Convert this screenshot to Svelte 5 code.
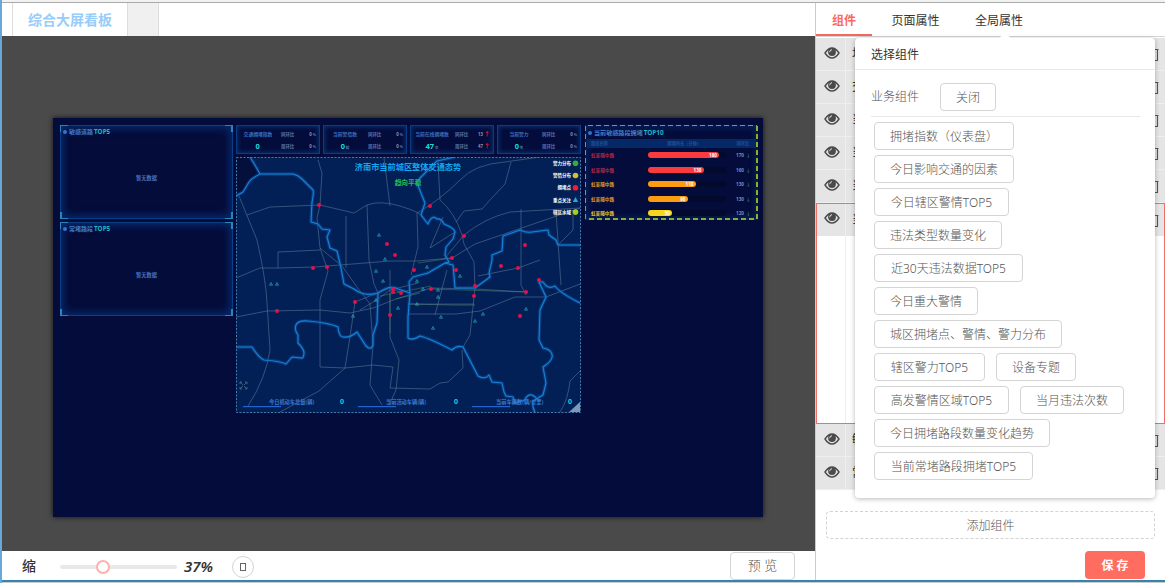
<script>
  const tabs = ['组件', '页面属性', '全局属性'];
  const layers = [
    { name: '地', open: false }, { name: '交', open: false }, { name: '当', open: false },
    { name: '当', open: false }, { name: '当', open: false }, { name: '当', open: true },
    { name: '敏', open: false }, { name: '常', open: false }
  ];
  const widgets = [
    ['拥堵指数（仪表盘）', 140], ['今日影响交通的因素', 140], ['今日辖区警情TOP5', 135],
    ['违法类型数量变化', 128], ['近30天违法数据TOP5', 149], ['今日重大警情', 104],
    ['城区拥堵点、警情、警力分布', 188], ['辖区警力TOP5', 111], ['设备专题', 80],
    ['高发警情区域TOP5', 135], ['当月违法次数', 104], ['今日拥堵路段数量变化趋势', 176],
    ['当前常堵路段拥堵TOP5', 159]
  ];
  const stats = [
    { t: '交通拥堵指数', v: '0', u: '', a: '0', b: '0', up: false },
    { t: '当前警情数', v: '0', u: '起', a: '0', b: '0', up: false },
    { t: '当前在线拥堵数', v: '47', u: '条', a: '13', b: '47', up: true },
    { t: '当前警力', v: '0', u: '名', a: '0', b: '0', up: false }
  ];
  const ranks = [
    { w: 71, c: '#f93b3e', n: '#b52846', v: '180', p: '170' },
    { w: 55.5, c: '#f93b3e', n: '#b52846', v: '130', p: '160' },
    { w: 47.5, c: '#fb9c12', n: '#e29a27', v: '110', p: '130' },
    { w: 39.5, c: '#fb9c12', n: '#e29a27', v: '90', p: '130' },
    { w: 24, c: '#fbd51a', n: '#e8c92b', v: '50', p: '120' }
  ];
  const legend = [
    ['警力分布', '#35ad3d', 'dot'], ['警情分布', '#d8bd31', 'dot'], ['拥堵点', '#ec1e3c', 'dot'],
    ['重点关注', '#16aee5', 'tri'], ['辖区水域', '#a2cf22', 'dot']
  ];
  const totals = [['今日机动车总量(辆)', 269, 243, 342], ['当前活动车辆(辆)', 386, 358, 456], ['当前车辆数(辆/公里)', 496, 472, 570]];
  const rivers = [
    'M250 157L256 167L260 174H293Q298 175 302 179L313 190Q314 193 312 202L311 222L318 224L322 229L330 230L327 237L330 248L337 251L341 268L344 284L354 289Q364 297 378 293Q391 284 398 289L410 293',
    'M260 174Q252 178 249 182L243 192L236 196',
    'M378 293L377 323L373 335L373 345Q371 351 366 346L357 332Q350 338 343 337Q339 337 338 327Q330 323 308 321Q298 320 296 325Q294 330 298 335L298 343Q303 348 304 352Q304 359 301 358L292 357L286 364Q280 361 264 360Q259 358 252 347L236 347',
    'M455 157L437 161L420 178L417 183L425 203L421 215L428 224Q432 214 437 219Q441 218 444 224Q454 228 455 232L453 239L446 247L445 255L449 262L445 263L428 273L413 277L409 282L410 293L408 317V338Q412 341 420 336Q429 338 452 350Q457 345 463 347L478 376Q485 380 489 375L492 382L502 383L504 392L506 396L513 397L515 403L525 400Q527 394 532 395Q540 399 533 401L533 407L535 413',
    'M533 401L543 395L546 383L543 367Q554 360 552 354Q550 349 543 348L539 340L540 310L546 297L539 282L543 282Q548 290 555 286Q560 293 580 303',
    'M445 263L453 265L455 288H475L490 277L489 273L492 260V255L502 251L503 236L520 230Q526 233 532 232L548 230L549 235L556 240L558 245H580'
  ];
  const roads = [
    'M318 160L322 173L320 205L317 218L320 248L328 271L320 300V367L345 368L373 365L393 367L390 388L430 389L440 383L448 382L463 368L462 350',
    'M239 196L257 240Q266 280 267 303L270 350Q266 378 248 406',
    'M247 215L270 207L320 205L354 213L367 205Q380 200 400 206T423 217',
    'M236 278L260 268H278L315 267L390 261L417 261L452 258L475 244L580 208',
    'M236 317L267 311L320 310L350 313L373 308L396 299L431 288L475 289L526 292',
    'M278 268V252L320 250', 'M320 248L342 266L357 287L370 304L373 345L370 385L382 405',
    'M346 216V268', 'M367 205L369 260L374 284L378 293', 'M384 158L390 206',
    'M417 213Q440 200 460 180Q475 164 505 162L540 157', 'M440 200Q455 213 462 235L464 244L474 262L475 288L470 335L463 347',
    'M402 293L390 288L355 302L350 337L345 368L319 391L280 412', 'M390 270V337L399 360L396 390L389 405',
    'M438 162L440 200', 'M511 162L505 184L490 200L482 209L464 211L456 222',
    'M521 209V285L526 295', 'M556 212L561 285', 'M573 210V230L558 245',
    'M418 283L390 290L378 299L360 310', 'M408 304L455 305H475', 'M408 314H456L480 311L515 297H546L580 284',
    'M447 270L435 315', 'M478 276L518 268L540 260', 'M417 213L418 247L411 275', 'M580 371L570 381Q568 400 560 412',
    'M455 232L430 248L443 217', 'M444 259L464 235Q485 218 510 212L580 208'
  ];
  const spots = [[319,205],[387,244],[395,255],[327,267],[313,268],[277,311],[355,302],[393,289],[393,292],[401,293],[390,315],[414,270],[431,289],[456,270],[474,296],[475,286],[501,266],[518,268],[539,280],[526,292],[520,316],[430,206],[464,236],[525,245],[452,258]];
  const marks = [[379,235],[385,259],[271,284],[277,284],[376,271],[383,281],[398,308],[353,316],[376,300],[460,276],[483,314],[475,321],[433,328],[441,317],[438,290],[423,289],[438,297],[417,304],[417,281],[427,267],[526,309]];
</script>

<div class="app">
  <div class="strip"></div>
  <div class="body">
    <section class="editor">
      <div class="pages"><div class="page">综合大屏看板</div><div class="page blank"></div></div>
      <div class="stage">
        <div class="board">
          <div class="col side">
            {#each ['敏感道路', '常堵路段'] as title}
              <div class="panel">
                <i></i><i></i><i></i><i></i>
                <div class="ptitle"><b></b><span>{title}</span><em>TOP5</em></div>
                <div class="empty">暂无数据</div>
              </div>
            {/each}
          </div>
          <div class="col mid">
            <div class="stats">
              {#each stats as s}
                <div class="stat">
                  <span class="st">{s.t}</span><span>同环比</span><span class="r">{s.a}{#if s.up}<u>↑</u>{:else}<small>%</small>{/if}</span>
                  <span class="sv">{s.v}<small>{s.u}</small></span><span>周环比</span><span class="r">{s.b}{#if s.up}<u>↑</u>{:else}<small>%</small>{/if}</span>
                </div>
              {/each}
            </div>
            <svg class="map" viewBox="236 157 345 256" width="345" height="256">
              <rect x="236" y="157" width="345" height="256" fill="#022056" />
              <path d="M236 157H250L260 174L249 182L243 192L236 196Z" fill="#050f3b" />
              <g fill="none" stroke="#7590a8" stroke-width=".6" opacity=".75" stroke-linejoin="round">
                {#each roads as d}<path {d} />{/each}
              </g>
              <g fill="none" stroke="#68a85b" stroke-width=".6" opacity=".65">
                <path d="M390 294V333M380 296L431 286M408 304H474M431 289L526 292M452 258L418 263M396 299L420 293" />
              </g>
              <g fill="none" stroke-linejoin="round">
                <g stroke="#0b54a4" stroke-width="3.4" opacity=".5">{#each rivers as d}<path {d} />{/each}</g>
                <g stroke="#1783d6" stroke-width="1.1">{#each rivers as d}<path {d} />{/each}</g>
              </g>
              {#each marks as [x, y]}<path d="M{x} {y - 1.5}l1.5 2.7h-3z" fill="none" stroke="#2fc0cc" stroke-width=".6" />{/each}
              {#each spots as [x, y]}<circle cx={x} cy={y} r="2" fill="#e4104a" />{/each}
              <text x="408" y="170" text-anchor="middle" font-size="8.2" font-weight="bold" fill="#16a6ef">济南市当前城区整体交通态势</text>
              <text x="408" y="184.5" text-anchor="middle" font-size="6.7" font-weight="bold" fill="#23bf58">趋向平稳</text>
              {#each legend as [t, c, k], i}
                <text x="571" y={165 + i * 12.2} text-anchor="end" font-size="4.5" font-weight="bold" fill="#fff">{t}</text>
                {#if k === 'dot'}<circle cx="575.5" cy={163.3 + i * 12.2} r="2.8" fill={c} />
                {:else}<path d="M575.5 197l2.7 5h-5.4z" fill={c} />{/if}
              {/each}
              {#each totals as [t, x, l, v]}
                <text {x} y="404.4" font-size="5.2" font-weight="bold" fill="#3d7ad3">{t}</text>
                <rect x={l} y="406" width="38" height="1.2" fill="#2563cf" />
                <text x={v} y="404.2" text-anchor="middle" font-size="6.8" font-weight="bold" fill="#1ce0d8">0</text>
              {/each}
              <path d="M240 384v-2h2m-2 0l3 3m4-1v-2h-2m2 0l-3 3m-4 2v2h2m-2 0l3-3m4 1v2h-2m2 0l-3-3" fill="none" stroke="#516b8d" stroke-width=".8" />
              <path d="M580 402v10h-11z" fill="#7d98ba" />
              <rect x="236.5" y="157.5" width="344" height="255" fill="none" stroke="#4779a8" stroke-dasharray="2 1.5" />
            </svg>
          </div>
          <div class="rank">
            <svg class="frame" width="173" height="95"><path d="M.5 94V.5H172" stroke="#3aa9d1" /><path d="M172 1V94H1" stroke="#b6df2b" stroke-width="1.5" /></svg>
            <div class="ptitle"><b></b><span>当前敏感路段拥堵</span><em>TOP10</em></div>
            <div class="rhead"><span>路段名称</span><span>拥堵时长（分钟）</span><span>同环比</span></div>
            {#each ranks as r}
              <div class="rrow">
                <span style:color={r.n}>虹吴隧中路</span>
                <div class="track"><div class="fill" style:width="{r.w}px" style:background={r.c}>{r.v}</div></div>
                <span class="pct">{r.p}<s>↓</s></span>
              </div>
            {/each}
          </div>
        </div>
      </div>
      <footer>
        <span class="zoomname">缩</span>
        <div class="slider"><div class="knob"></div></div>
        <span class="zoomval">37%</span>
        <span class="round"><span></span></span>
        <button class="preview">预 览</button>
      </footer>
    </section>

    <aside>
      <nav>{#each tabs as t, i}<div class="tab" class:on={i === 0}>{t}</div>{/each}</nav>
      <div class="layers">
        {#each layers as l}
          <div class="layer" class:open={l.open}>
            <div class="lrow">
              <div class="eye">
                <svg width="16" height="14" viewBox="0 0 16 14"><path d="M1 7Q4.3 2 8 2T15 7Q11.7 12 8 12T1 7Z" fill="none" stroke="#4a4a4a" stroke-width="1.4" /><circle cx="8" cy="6" r="3.9" fill="#4a4a4a" /><path d="M5.7 6.2Q5.8 3.8 8 3.7" fill="none" stroke="#e5e5e5" stroke-width="1" /></svg>
              </div>
              <div class="lname">{l.name}</div>
              <svg class="bin" width="14" height="14" viewBox="0 0 14 14"><path d="M0 1.5H13.5M2 4V12.5H12.5V1.5M5.5 5V10M9 5V10" fill="none" stroke="#555" stroke-width="1.1" /></svg>
            </div>
            {#if l.open}<div class="detail"><div></div></div>{/if}
          </div>
        {/each}
      </div>
      <div class="add">添加组件</div>
      <button class="save">保 存</button>

      <div class="pop">
        <div class="arrow"></div>
        <div class="phead">选择组件</div>
        <div class="pbody">
          <div class="group"><span>业务组件</span><button style:width="56px">关闭</button></div>
          <div class="opts">{#each widgets as [t, w]}<button style:width="{w}px">{t}</button>{/each}</div>
        </div>
      </div>
    </aside>
  </div>
</div>

<style>
  :global(body) { background: #fff; overflow: hidden; }
  * { box-sizing: border-box; }
  .app { width: 1165px; height: 583px; display: flex; flex-direction: column; font: 12px/1.5 "Noto Sans", "Noto Sans CJK SC", sans-serif; color: #555; background: #c9cdd0; border-left: 2px solid #66a9d9; padding-bottom: 1px; }
  .strip { height: 3px; flex: none; background: #f2f2f2; border-bottom: 1px solid #aaa; }
  .body { flex: 1; min-height: 0; display: flex; background: #fff; border-bottom: 2px solid #3385ab; }
  .editor { width: 813px; display: flex; flex-direction: column; }
  .pages { height: 33px; flex: none; display: flex; padding-left: 10px; }
  .page { width: 116px; border: solid #ddd; border-width: 0 1px; text-align: center; font-size: 14px; font-weight: bold; line-height: 34px; color: #99cdf9; }
  .blank { width: 31px; background: #f0f0f0; border-left: 0; }
  .stage { height: 515px; flex: none; background: #4a4a4a; padding: 82px 0 0 51px; }
  .board { width: 710px; height: 399px; background: #040c3c; box-shadow: 0 0 5px #111; display: flex; gap: 3px; padding: 7px 5px 7px 7px; }
  .col { display: flex; flex-direction: column; }
  .side { width: 173px; gap: 3px; }
  .panel { position: relative; height: 94px; border: 1px solid #0b3f83; background: #040c39; box-shadow: inset 0 0 9px 2px #062e75; display: flex; flex-direction: column; }
  .panel i { position: absolute; width: 8px; height: 7px; border: 1px solid #2586bc; }
  .panel i:nth-child(1) { left: -1px; top: -1px; border-width: 1px 0 0 1px; }
  .panel i:nth-child(2) { right: -1px; top: -1px; border-width: 1px 2px 0 0; }
  .panel i:nth-child(3) { left: -1px; bottom: -1px; border-width: 0 0 1px 2px; }
  .panel i:nth-child(4) { right: -1px; bottom: -1px; border-width: 0 2px 1px 0; }
  .ptitle { height: 12px; display: flex; align-items: center; padding-left: 2px; font-size: 6px; line-height: 12px; font-weight: bold; color: #407bc8; }
  .ptitle b { width: 4px; height: 4px; border-radius: 2px; background: #3474ca; margin-right: 2px; }
  .ptitle em { font-style: normal; font-size: 6.4px; color: #17b7cf; margin-left: 1px; }
  .empty { text-align: center; font-size: 5.2px; line-height: 8px; font-weight: bold; color: #4773c1; margin-top: 36px; }
  .mid { width: 345px; gap: 3px; }
  .stats { height: 29px; display: flex; gap: 3px; }
  .stat { width: 84px; border: 1px solid #0b3b85; box-shadow: inset 0 0 4px 1px #08316f; display: grid; grid-template-columns: 41px 18px 17px; grid-template-rows: 12px 12px; padding: 2px 3px; font-size: 4.4px; line-height: 12px; font-weight: bold; color: #5972a9; white-space: nowrap; }
  .stat span { height: 12px; }
  .stat .st { font-size: 4.8px; color: #396fbd; text-align: center; padding-right: 5px; }
  .stat .sv { font-size: 7.4px; color: #18dddd; text-align: center; padding-right: 5px; }
  .stat small { font-size: 3.5px; color: #5377bd; margin-left: 1px; }
  .stat .r { text-align: right; color: #8393b8; }
  u { color: #e32040; text-decoration: none; font-size: 6px; margin-left: 1px; }
  .map { display: block; font-family: "Noto Sans CJK SC", sans-serif; }
  .rank { position: relative; width: 173px; height: 95px; margin-left: 1px; padding: 1px; box-shadow: inset 0 0 7px 1px #06316f; flex: none; }
  .frame { position: absolute; inset: 0; fill: none; stroke-dasharray: 5 3; }
  .rank .ptitle { font-size: 6.1px; height: 13px; }
  .rhead { height: 9px; margin: 0 1px; background: #042966; display: flex; justify-content: space-between; padding: 0 7px 0 4px; font-size: 4.2px; line-height: 9px; font-weight: bold; color: #224f98; }
  .rhead span:nth-child(2) { margin-left: 24px; }
  .rrow { height: 14.5px; display: flex; align-items: center; padding-left: 5px; font-size: 4.6px; line-height: 14px; font-weight: bold; }
  .rrow > span:first-child { width: 57px; }
  .track { width: 78px; height: 6px; border-radius: 3px; background: #030a2c; }
  .fill { height: 6px; border-radius: 3px; text-align: right; padding-right: 2px; line-height: 6px; color: #fff; }
  .pct { margin-left: 10px; color: #708dce; }
  s { color: #278660; text-decoration: none; margin-left: 2px; }
  footer { flex: 1; display: flex; align-items: center; padding: 0 20px; color: #333; }
  .zoomname { font-size: 14px; font-weight: 500; width: 38px; line-height: 20px; }
  .slider { position: relative; width: 117px; height: 4px; border-radius: 2px; background: #e9e9e9; margin-top: 3px; }
  .knob { position: absolute; left: 36px; top: -5px; width: 14px; height: 14px; border: 2px solid #ffb0ac; border-radius: 50%; background: #fff; }
  .zoomval { width: 48px; margin-left: 7px; font-size: 15px; line-height: 20px; font-weight: 600; font-style: italic; }
  .round { width: 22px; height: 22px; border: 1px solid #d4d4d4; border-radius: 50%; display: flex; align-items: center; justify-content: center; margin-top: 2px; }
  .round span { width: 6px; height: 8px; border: 1px solid #666; margin-top: 1px; }
  button { font: 12px/1 "Noto Sans", "Noto Sans CJK SC", sans-serif; font-weight: 300; color: #555; background: #fff; border: 1px solid #d5d5d5; border-radius: 4px; height: 28px; padding: 2px 0 0; white-space: nowrap; flex: none; }
  .preview { margin-left: auto; width: 65px; font-size: 13px; padding: 0; }
  aside { position: relative; flex: 1; border-left: 1px solid #ccc; display: flex; flex-direction: column; }
  nav { height: 34px; flex: none; display: flex; border-bottom: 1px solid #d5d5d5; }
  .tab { height: 33px; padding: 0 16px; line-height: 36px; color: #333; margin-right: 3.5px; }
  .tab.on { color: #fb6a5f; font-weight: bold; border-bottom: 2px solid #f2695f; }
  .layers { margin-top: 1px; }
  .lrow { height: 33px; display: flex; align-items: center; background: #e5e5e5; border-bottom: 1px solid #efefef; }
  .eye { width: 30px; height: 32px; border-right: 1px solid #efefef; padding: 8px 0 0 8px; }
  .lname { margin-left: 6px; flex: 1; color: #333; }
  .bin { margin: 1px 6px 0 0; }
  .open { height: 221px; border: 1px solid #f26d68; }
  .open .eye { width: 29px; padding: 7px 0 0 7px; }
  .open .bin { margin-right: 5px; }
  .open .lrow { height: 32px; border: 0; }
  .detail { display: flex; height: 187px; padding-left: 28px; }
  .detail div { border-left: 1px solid #efefef; }
  .add { height: 28px; margin: 21px 10px 0; border: 1px dashed #d3d3d3; border-radius: 4px; text-align: center; line-height: 28px; font-weight: 300; }
  .save { width: 60px; height: 28px; border: 0; background: #ff6c60; color: #fff; font-weight: bold; align-self: flex-end; margin: 12px 20px 0 0; padding-top: 1px; }
  .pop { position: absolute; left: 39px; top: 35px; width: 300px; height: 460px; border-radius: 4px; background: #fff; box-shadow: 0 1px 5px rgba(0,0,0,.28); }
  .arrow { position: absolute; left: 146px; top: -4px; width: 8px; height: 8px; background: #fff; transform: rotate(45deg); }
  .phead { position: relative; height: 32px; border-bottom: 1px solid #e8e8e8; line-height: 34px; padding-left: 16px; color: #333; }
  .pbody { padding: 13px 15px 0 16px; }
  .group { height: 34px; border-bottom: 1px solid #e8e8e8; display: flex; gap: 21px; font-weight: 300; }
  .group span { line-height: 27px; }
  .opts { display: flex; flex-wrap: wrap; gap: 5px 11px; width: 260px; padding: 5px 0 0 3px; }
</style>
